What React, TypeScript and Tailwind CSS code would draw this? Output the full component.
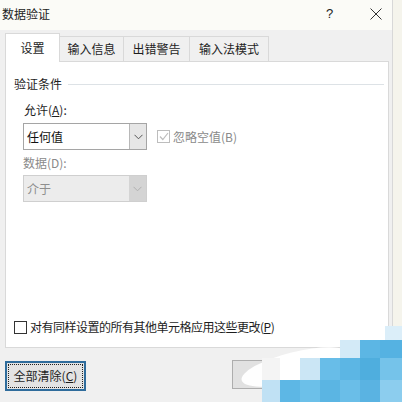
import React from "react";

const Chevron = ({ color }: { color: string }) => (
  <svg width="9" height="6" viewBox="0 0 9 6" fill="none">
    <path d="M0.5 0.8 L4.5 4.8 L8.5 0.8" stroke={color} strokeWidth="1" />
  </svg>
);

export default function App() {
  const font = "font-['Noto_Sans_CJK_SC','Microsoft_YaHei',sans-serif]";
  return (
    <div className={`relative w-[402px] h-[402px] overflow-hidden bg-[#f5f4ec] flex ${font} text-[12px] leading-[16px] text-[#1e1e1e]`}>
      <div className="w-[393px] h-full flex flex-col bg-[#f0f0f0] border-r border-[#d8d8d8]">
        {/* title bar */}
        <div className="h-[30px] bg-[#fbfbf7] flex items-center pl-[2px] pb-[3px]">
          <span className="text-[12px] text-[#222]">数据验证</span>
          <span className="ml-[276px] text-[13px] text-[#222] font-['Liberation_Sans',sans-serif]">?</span>
          <svg className="ml-[37px]" width="12" height="12" viewBox="0 0 12 12">
            <path d="M0.5 0.5 L11.5 11.5 M11.5 0.5 L0.5 11.5" stroke="#333" strokeWidth="1" />
          </svg>
        </div>
        {/* tabs */}
        <div className="h-[31px] flex items-end px-[5px] relative z-10">
          <div className="h-[29px] w-[55px] -mb-px bg-white border border-b-0 border-[#d9d9d9] flex items-center justify-center pb-[1px]">设置</div>
          <div className="h-[25px] w-[64px] border-t border-r border-[#d9d9d9] flex items-center justify-center">输入信息</div>
          <div className="h-[25px] w-[66px] border-t border-r border-[#d9d9d9] flex items-center justify-center">出错警告</div>
          <div className="h-[25px] w-[79px] border-t border-r border-[#d9d9d9] flex items-center justify-center">输入法模式</div>
        </div>
        {/* panel */}
        <div className="mx-[5px] w-[384px] h-[287px] bg-white border border-[#d9d9d9] flex flex-col">
          <div className="mt-[14px] pl-[8px] flex items-center">
            <span>验证条件</span>
            <div className="flex-1 h-px bg-[#dde2e6] ml-[6px] mr-[4px]" />
          </div>
          <div className="mt-[10px] pl-[18px]">
            允许(<span className="underline">A</span>):
          </div>
          <div className="mt-[5px] pl-[17px] flex items-center">
            <div className="w-[124px] h-[27px] border border-[#a5a5a5] flex">
              <div className="flex-1 flex items-center pl-[3px] text-[12px] text-[#111]">任何值</div>
              <div className="w-[17px] h-full bg-[#e6e6e6] border-l border-[#b8b8b8] flex items-center justify-center">
                <Chevron color="#555" />
              </div>
            </div>
            <div className="ml-[10px] w-[13px] h-[13px] border border-[#bdbdbd] flex items-center justify-center">
              <svg width="10" height="9" viewBox="0 0 10 9">
                <path d="M1 4.5 L3.8 7.5 L9 1" stroke="#bdbdbd" strokeWidth="1.2" fill="none" />
              </svg>
            </div>
            <span className="ml-[3px] text-[#8a8a8a]">忽略空值(B)</span>
          </div>
          <div className="mt-[5px] pl-[17px] text-[#8a8a8a]">数据(D):</div>
          <div className="mt-[4px] pl-[17px]">
            <div className="w-[124px] h-[27px] border border-[#cfcfcf] bg-[#ececec] flex">
              <div className="flex-1 flex items-center pl-[3px] text-[#8e8e8e]">介于</div>
              <div className="w-[17px] h-full bg-[#d4d4d4] flex items-center justify-center">
                <Chevron color="#b0b0b0" />
              </div>
            </div>
          </div>
          <div className="mt-auto mb-[12px] pl-[8px] flex items-center">
            <div className="w-[13px] h-[13px] border border-[#333] bg-white" />
            <span className="ml-[3px] tracking-[-0.5px]">
              对有同样设置的所有其他单元格应用这些更改(<span className="underline">P</span>)
            </span>
          </div>
        </div>
        {/* bottom buttons */}
        <div className="mt-[13px] flex items-start">
          <div className="ml-[5px] w-[81px] h-[30px] border-2 border-[#2f6c9c] bg-[#e3e3e3] p-[1px]">
            <div className="w-full h-full border border-dotted border-[#222] flex items-center justify-center">
              全部清除(<span className="underline">C</span>)
            </div>
          </div>
          <div className="ml-[146px] mt-[-1px] w-[75px] h-[29px] border border-[#adadad] bg-[#e1e1e1]" />
          <div className="ml-[7px] mt-[-1px] w-[75px] h-[29px] border border-[#adadad] bg-[#e1e1e1]" />
        </div>
      </div>

      {/* watermark mosaic */}
      <div className="absolute left-[240px] top-[352px] w-[110px] h-[30px] bg-white rounded-[50%] rotate-[-14deg] opacity-95" />
      <div className="absolute left-[340px] top-[340px] w-[20px] h-[18px] bg-[#d3eaf7]" />
      <div className="absolute left-[360px] top-[340px] w-[20px] h-[18px] bg-[#5cb6e4]" />
      <div className="absolute left-[380px] top-[340px] w-[22px] h-[18px] bg-[#55b2e2]" />
      <div className="absolute left-[385px] top-[326px] w-[17px] h-[14px] bg-[#dbeef9]" />
      <div className="absolute left-[262px] top-[358px] w-[18px] h-[22px] bg-[#f4f4f4]" />
      <div className="absolute left-[280px] top-[358px] w-[20px] h-[22px] bg-white" />
      <div className="absolute left-[300px] top-[358px] w-[20px] h-[22px] bg-[#cbe6f5]" />
      <div className="absolute left-[320px] top-[358px] w-[20px] h-[22px] bg-[#68bde8]" />
      <div className="absolute left-[340px] top-[358px] w-[20px] h-[22px] bg-[#5cb6e4]" />
      <div className="absolute left-[360px] top-[358px] w-[20px] h-[22px] bg-[#4faede]" />
      <div className="absolute left-[380px] top-[358px] w-[22px] h-[22px] bg-[#75c3ea]" />
      <div className="absolute left-[262px] top-[380px] w-[18px] h-[22px] bg-[#c0e1f4]" />
      <div className="absolute left-[280px] top-[380px] w-[20px] h-[22px] bg-[#5db7e5]" />
      <div className="absolute left-[300px] top-[380px] w-[20px] h-[22px] bg-[#6cc0e9]" />
      <div className="absolute left-[320px] top-[380px] w-[20px] h-[22px] bg-[#5bb5e3]" />
      <div className="absolute left-[340px] top-[380px] w-[20px] h-[22px] bg-[#6abee8]" />
      <div className="absolute left-[360px] top-[380px] w-[20px] h-[22px] bg-[#5ab3e2]" />
      <div className="absolute left-[380px] top-[380px] w-[22px] h-[22px] bg-[#8ccdee]" />
    </div>
  );
}
